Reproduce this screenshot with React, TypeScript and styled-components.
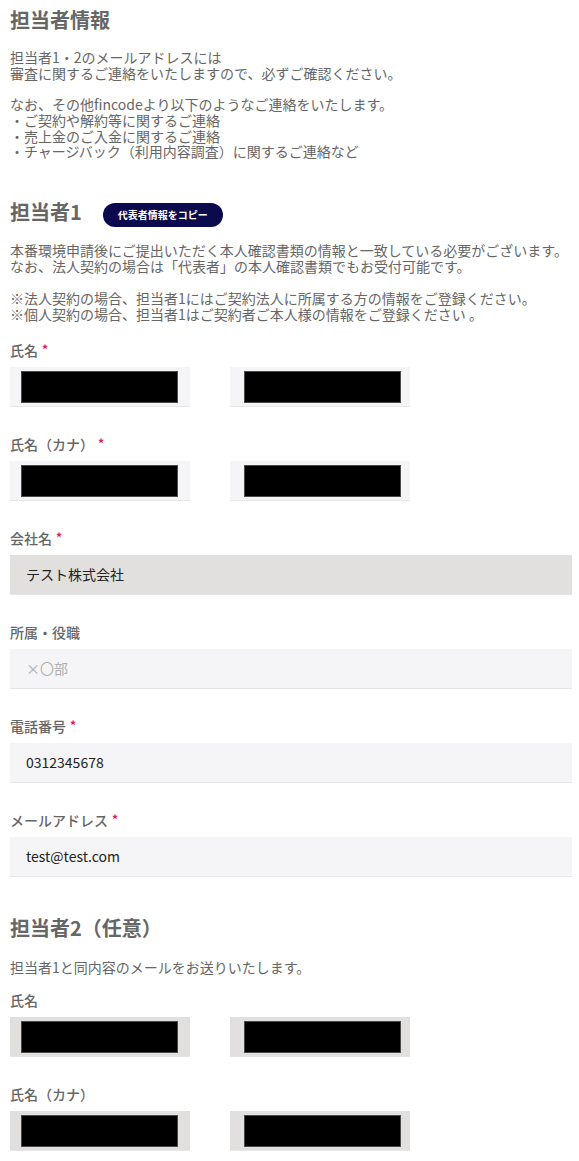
import React from "react";
import styled, { createGlobalStyle } from "styled-components";

const GlobalStyle = createGlobalStyle`
  html, body { margin: 0; padding: 0; background: #ffffff; }
  body {
    font-family: "Noto Sans CJK JP", "Noto Sans", sans-serif;
    color: #666666;
    -webkit-font-smoothing: antialiased;
  }
  * { box-sizing: border-box; }
`;

const Page = styled.div`
  width: 572px;
  padding: 6px 0 20px 10px;
`;

const Title = styled.h2`
  margin: 0;
  font-size: 20px;
  line-height: 28px;
  font-weight: 700;
  color: #666666;
`;

const Paragraph = styled.p<{ $lh?: number; $mt: number }>`
  margin: ${(p) => p.$mt}px 0 0;
  font-size: 14px;
  line-height: ${(p) => p.$lh ?? 16}px;
  color: #666666;
  white-space: pre-line;
`;

const HeadingRow = styled.div<{ $mt: number }>`
  display: flex;
  align-items: flex-start;
  gap: 21px;
  margin-top: ${(p) => p.$mt}px;
`;

const CopyButton = styled.button`
  margin-top: 5px;
  width: 120px;
  height: 24px;
  border: none;
  border-radius: 12px;
  background: #0b0a4e;
  color: #ffffff;
  font-family: "Noto Sans CJK JP", sans-serif;
  font-size: 10px;
  font-weight: 700;
  line-height: 24px;
  padding: 0;
  cursor: pointer;
`;

const FieldList = styled.div<{ $mt: number }>`
  margin-top: ${(p) => p.$mt}px;
  display: flex;
  flex-direction: column;
`;

const Field = styled.div`
  margin-bottom: 27px;
`;

const Label = styled.div`
  height: 20px;
  font-size: 14px;
  line-height: 20px;
  font-weight: 500;
  color: #666666;
  margin-bottom: 7px;
`;

const Req = styled.span`
  position: relative;
  top: -2px;
  color: #e0195f;
  font-size: 12px;
  font-weight: 700;
  line-height: 1;
  margin-left: 4px;
`;

const NameRow = styled.div`
  display: flex;
  gap: 40px;
`;

const Box = styled.div<{ $disabled?: boolean; $half?: boolean }>`
  width: ${(p) => (p.$half ? "180px" : "100%")};
  height: 40px;
  background: ${(p) => (p.$disabled ? "#e1e0de" : "#f5f5f7")};
  border-bottom: 1px solid #e6e6e8;
  display: flex;
  align-items: center;
`;

const TextInput = styled.input<{ $disabled?: boolean }>`
  width: 100%;
  height: 40px;
  border: none;
  border-bottom: 1px solid #e6e6e8;
  background: ${(p) => (p.$disabled ? "#e1e0de" : "#f5f5f7")};
  padding: 0 16px;
  font-family: "Noto Sans CJK JP", "Noto Sans", sans-serif;
  font-size: 14px;
  color: #222222;
  outline: none;
  display: block;
  &::placeholder { color: #b0b0b0; }
`;

const Redact = styled.div<{ $right?: boolean }>`
  width: 157px;
  height: 32px;
  margin-left: ${(p) => (p.$right ? 14 : 11)}px;
  margin-top: 2px;
  background: #000000;
  border: 1px solid #4a4a4a;
`;

const Heading = styled.h3`
  margin: 0;
  font-size: 20px;
  line-height: 28px;
  font-weight: 700;
  color: #666666;
`;

const NameField: React.FC<{ label: string; required?: boolean; disabled?: boolean }> = ({
  label,
  required,
  disabled,
}) => (
  <Field>
    <Label>
      {label}
      {required && <Req>*</Req>}
    </Label>
    <NameRow>
      <Box $half $disabled={disabled}>
        <Redact />
      </Box>
      <Box $half $disabled={disabled}>
        <Redact $right />
      </Box>
    </NameRow>
  </Field>
);

const TextField: React.FC<{
  label: string;
  required?: boolean;
  disabled?: boolean;
  value?: string;
  placeholder?: string;
}> = ({ label, required, disabled, value, placeholder }) => (
  <Field>
    <Label>
      {label}
      {required && <Req>*</Req>}
    </Label>
    <TextInput
      $disabled={disabled}
      readOnly
      value={value ?? ""}
      placeholder={placeholder}
    />
  </Field>
);

export default function App() {
  return (
    <>
      <GlobalStyle />
      <Page>
        <Title>担当者情報</Title>
        <Paragraph $mt={16} $lh={15.7}>
          {"担当者1・2のメールアドレスには\n審査に関するご連絡をいたしますので、必ずご確認ください。\n\nなお、その他fincodeより以下のようなご連絡をいたします。\n・ご契約や解約等に関するご連絡\n・売上金のご入金に関するご連絡\n・チャージバック（利用内容調査）に関するご連絡など"}
        </Paragraph>

        <HeadingRow $mt={38}>
          <Heading>担当者1</Heading>
          <CopyButton type="button">代表者情報をコピー</CopyButton>
        </HeadingRow>
        <Paragraph $mt={15}>
          {"本番環境申請後にご提出いただく本人確認書類の情報と一致している必要がございます。\nなお、法人契約の場合は「代表者」の本人確認書類でもお受付可能です。\n\n※法人契約の場合、担当者1にはご契約法人に所属する方の情報をご登録ください。\n※個人契約の場合、担当者1はご契約者ご本人様の情報をご登録ください 。"}
        </Paragraph>

        <FieldList $mt={18}>
          <NameField label="氏名" required />
          <NameField label="氏名（カナ）" required />
          <TextField label="会社名" required disabled value="テスト株式会社" />
          <TextField label="所属・役職" placeholder="×〇部" />
          <TextField label="電話番号" required value="0312345678" />
          <TextField label="メールアドレス" required value="test@test.com" />
        </FieldList>

        <HeadingRow $mt={10}>
          <Heading>担当者2（任意）</Heading>
        </HeadingRow>
        <Paragraph $mt={17}>担当者1と同内容のメールをお送りいたします。</Paragraph>

        <FieldList $mt={15}>
          <NameField label="氏名" disabled />
          <NameField label="氏名（カナ）" disabled />
        </FieldList>
      </Page>
    </>
  );
}
